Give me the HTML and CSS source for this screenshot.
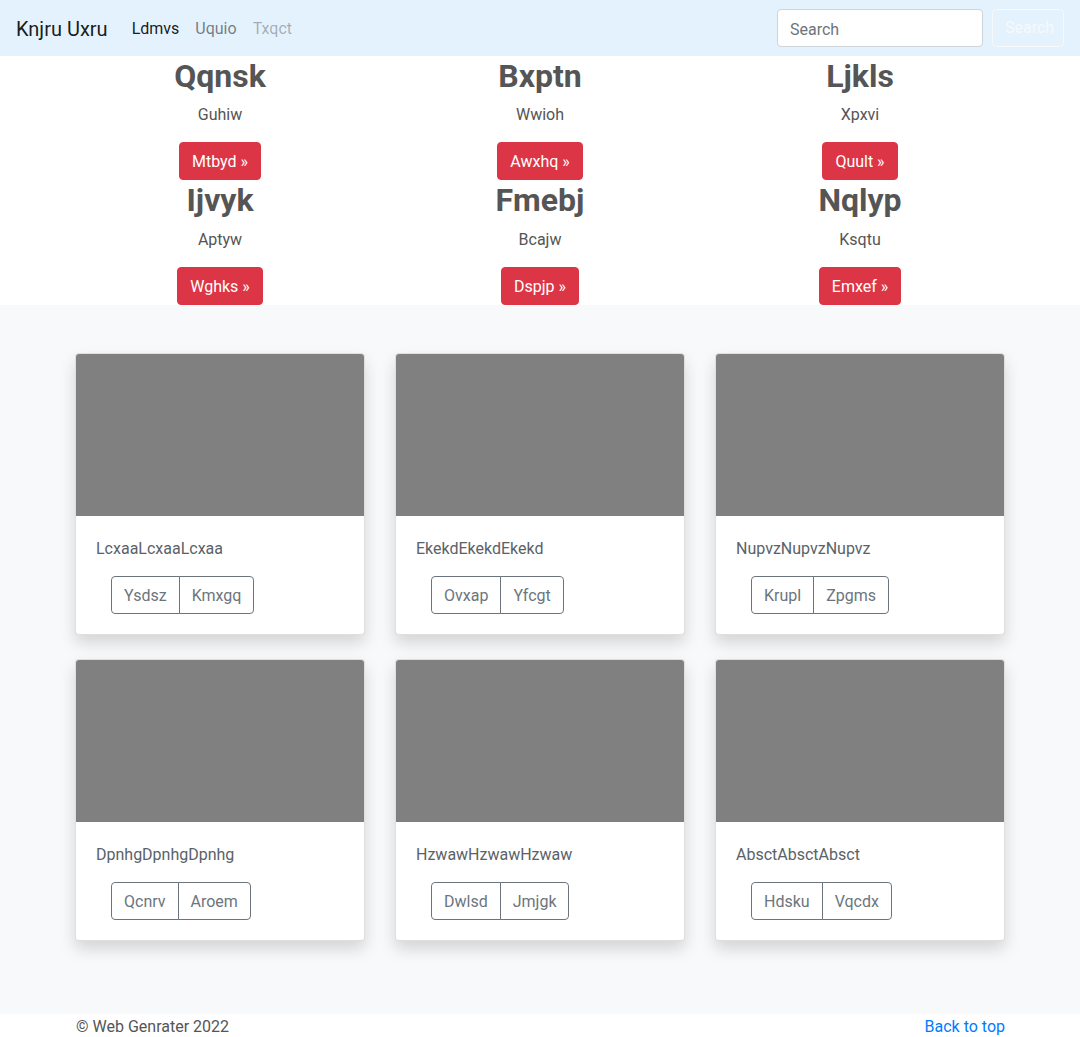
FILE: index.html
```html
<!DOCTYPE html>
<html lang="en">
<head>
<meta charset="utf-8">
<title>Knjru Uxru</title>
<link rel="stylesheet" href="styles.css">
</head>
<body>
<nav class="navbar">
  <a class="brand" href="#">Knjru Uxru</a>
  <ul class="nav">
    <li><a class="nav-link active" href="#">Ldmvs</a></li>
    <li><a class="nav-link" href="#">Uquio</a></li>
    <li><a class="nav-link disabled" href="#">Txqct</a></li>
  </ul>
  <form class="search">
    <input class="search-input" type="text" placeholder="Search">
    <button class="search-btn" type="button">Search</button>
  </form>
</nav>

<section class="hero">
  <div class="container">
    <div class="hero-grid">
      <div class="feature"><h2>Qqnsk</h2><p>Guhiw</p><a class="btn-red" href="#">Mtbyd »</a></div>
      <div class="feature"><h2>Bxptn</h2><p>Wwioh</p><a class="btn-red" href="#">Awxhq »</a></div>
      <div class="feature"><h2>Ljkls</h2><p>Xpxvi</p><a class="btn-red" href="#">Quult »</a></div>
      <div class="feature"><h2>Ijvyk</h2><p>Aptyw</p><a class="btn-red" href="#">Wghks »</a></div>
      <div class="feature"><h2>Fmebj</h2><p>Bcajw</p><a class="btn-red" href="#">Dspjp »</a></div>
      <div class="feature"><h2>Nqlyp</h2><p>Ksqtu</p><a class="btn-red" href="#">Emxef »</a></div>
    </div>
  </div>
</section>

<section class="album">
  <div class="container">
    <div class="card-grid">
      <div class="card"><div class="thumb"></div><div class="card-body"><p class="card-text">LcxaaLcxaaLcxaa</p><div class="btn-group"><button class="btn-outline">Ysdsz</button><button class="btn-outline">Kmxgq</button></div></div></div>
      <div class="card"><div class="thumb"></div><div class="card-body"><p class="card-text">EkekdEkekdEkekd</p><div class="btn-group"><button class="btn-outline">Ovxap</button><button class="btn-outline">Yfcgt</button></div></div></div>
      <div class="card"><div class="thumb"></div><div class="card-body"><p class="card-text">NupvzNupvzNupvz</p><div class="btn-group"><button class="btn-outline">Krupl</button><button class="btn-outline">Zpgms</button></div></div></div>
      <div class="card"><div class="thumb"></div><div class="card-body"><p class="card-text">DpnhgDpnhgDpnhg</p><div class="btn-group"><button class="btn-outline">Qcnrv</button><button class="btn-outline">Aroem</button></div></div></div>
      <div class="card"><div class="thumb"></div><div class="card-body"><p class="card-text">HzwawHzwawHzwaw</p><div class="btn-group"><button class="btn-outline">Dwlsd</button><button class="btn-outline">Jmjgk</button></div></div></div>
      <div class="card"><div class="thumb"></div><div class="card-body"><p class="card-text">AbsctAbsctAbsct</p><div class="btn-group"><button class="btn-outline">Hdsku</button><button class="btn-outline">Vqcdx</button></div></div></div>
    </div>
  </div>
</section>

<footer class="footer">
  <div class="container footer-row">
    <p>© Web Genrater 2022</p>
    <a href="#">Back to top</a>
  </div>
</footer>
</body>
</html>
```

FILE: styles.css
```css
* { box-sizing: border-box; }
html, body { margin: 0; }
body {
  font-family: "Segoe UI", Roboto, "Noto Sans", sans-serif;
  font-size: 16px;
  line-height: 1.5;
  color: #555;
  background: #fff;
}
a { text-decoration: none; }

.navbar {
  display: flex;
  align-items: center;
  height: 56px;
  padding: 8px 16px;
  background: #e3f2fd;
}
.brand {
  font-size: 20px;
  line-height: 30px;
  padding-top: 2px;
  color: rgba(0,0,0,.9);
  margin-right: 16px;
}
.nav {
  display: flex;
  list-style: none;
  margin: 0;
  padding: 0;
  flex: 1;
}
.nav-link {
  display: block;
  padding: 9px 8px 7px;
  color: rgba(0,0,0,.5);
}
.nav-link.active { color: rgba(0,0,0,.9); }
.nav-link.disabled { color: rgba(0,0,0,.3); }
.search { display: flex; align-items: center; }
.search-input {
  width: 206px;
  height: 38px;
  padding: 7px 12px 5px;
  font: inherit;
  color: #495057;
  border: 1px solid #ced4da;
  border-radius: 4px;
  background: #fff;
  margin-right: 9px;
}
.search-input::placeholder { color: #6c757d; }
.search-btn {
  height: 38px;
  width: 72px;
  padding: 6px 12px;
  font: inherit;
  color: #f8f9fa;
  background: transparent;
  border: 1px solid #f8f9fa;
  border-radius: 4px;
}

.container {
  max-width: 960px;
  margin: 0 auto;
  padding: 0 15px;
}

.hero { background: #fff; }
.hero-grid {
  display: grid;
  grid-template-columns: repeat(3, 1fr);
  margin: 0 -15px;
}
.feature {
  text-align: center;
  padding: 0 15px;
}
.feature h2 {
  margin: 0;
  padding: 1px 0 7px;
  font-size: 32px;
  font-weight: 700;
  line-height: 38.4px;
  color: #555;
}
.feature p { margin: 0; padding: 1px 0 15px; }
.btn-red {
  display: inline-block;
  height: 38px;
  padding: 7px 12px 5px;
  color: #fff;
  background: #dc3545;
  border: 1px solid #dc3545;
  border-radius: 4px;
  line-height: 24px;
}

.album {
  background: #f8f9fa;
  padding: 48px 0 49px;
}
.card-grid {
  display: grid;
  grid-template-columns: repeat(3, 1fr);
  margin: 0 -15px;
}
.card {
  margin: 0 15px 24px;
  background: #fff;
  border: 1px solid rgba(0,0,0,.125);
  border-radius: 4px;
  overflow: hidden;
  box-shadow: 0 8px 16px rgba(0,0,0,.15);
}
.thumb {
  height: 162px;
  background: #808080;
}
.card-body { padding: 20px; }
.card-text { margin: 0; padding: 1px 0 15px; color: #5a6268; }
.btn-group {
  display: inline-flex;
  margin-left: 15px;
}
.btn-outline {
  height: 38px;
  padding: 7px 12px 5px;
  font: inherit;
  color: #6c757d;
  background: transparent;
  border: 1px solid #6c757d;
}
.btn-outline:first-child { border-radius: 4px 0 0 4px; }
.btn-outline:last-child { border-radius: 0 4px 4px 0; margin-left: -1px; }

.footer { background: #fff; }
.footer-row {
  display: flex;
  justify-content: space-between;
  padding-top: 1px;
}
.footer-row p { margin: 0; color: #555; padding-left: 1px; }
.footer-row a { color: #007bff; }
```
